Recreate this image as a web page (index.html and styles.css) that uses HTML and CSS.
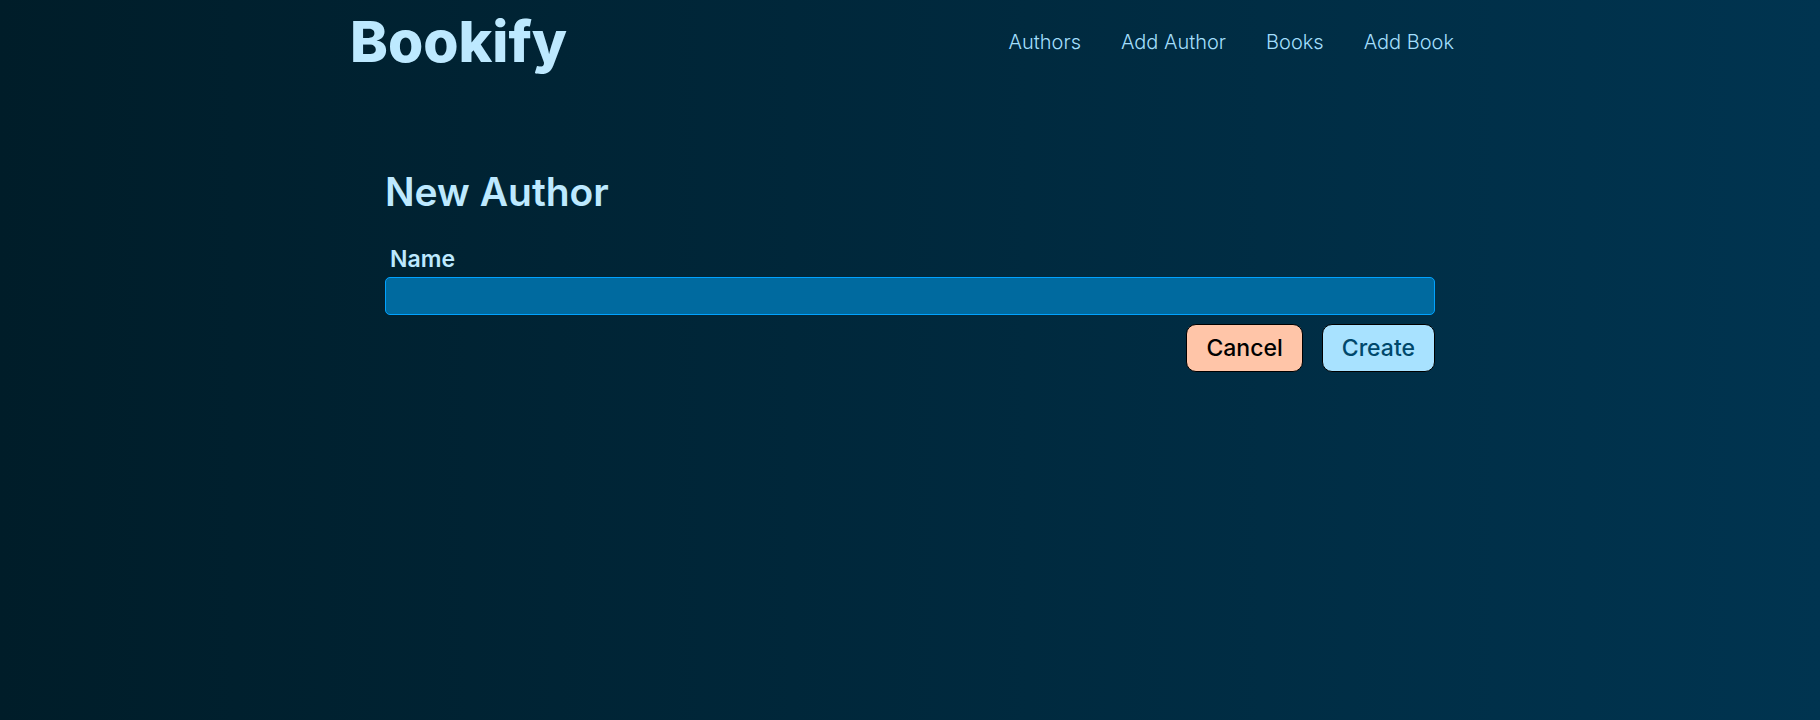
FILE: index.html
```
<!DOCTYPE html>
<html lang="en">
<head>
<meta charset="utf-8">
<meta name="viewport" content="width=device-width, initial-scale=1">
<title>Bookify</title>
<link rel="stylesheet" href="styles.css">
</head>
<body>
<header class="header">
  <h1 class="logo">Bookify</h1>
  <nav class="nav">
    <a class="nav-link" href="#authors">Authors</a>
    <a class="nav-link" href="#new-author">Add Author</a>
    <a class="nav-link" href="#books">Books</a>
    <a class="nav-link" href="#new-book">Add Book</a>
  </nav>
</header>
<main class="main">
  <h2 class="title">New Author</h2>
  <form class="form">
    <label class="label" for="name">Name</label>
    <input class="input" type="text" id="name" name="name">
    <div class="actions">
      <button class="button button-cancel" type="button">Cancel</button>
      <button class="button button-create" type="submit">Create</button>
    </div>
  </form>
</main>
</body>
</html>
```
FILE: styles.css
```
* {
  box-sizing: border-box;
}

body {
  margin: 0;
  min-height: 100vh;
  font-family: Inter, "Liberation Sans", sans-serif;
  color: #bde9ff;
  background: linear-gradient(to right, #001d29, #003450);
}

.header {
  display: flex;
  align-items: center;
  justify-content: space-between;
  max-width: 1120px;
  margin: 0 auto;
  padding: 8px 16px 8px 0;
}

.logo {
  margin: 0;
  font-size: 57px;
  line-height: 68px;
  font-weight: 800;
}

.nav {
  display: flex;
  gap: 40px;
}

.nav-link {
  color: #a3dffc;
  font-size: 20px;
  line-height: 24px;
  font-weight: 300;
  text-decoration: none;
}

.main {
  max-width: 1120px;
  margin: 0 auto;
  padding: 84px 35px;
}

.title {
  margin: 0 0 29px;
  font-size: 39px;
  line-height: 48px;
  font-weight: 600;
}

.form {
  display: flex;
  flex-direction: column;
}

.label {
  padding: 0 5px;
  margin-bottom: 4px;
  font-size: 23px;
  line-height: 28px;
  font-weight: 600;
}

.input {
  width: 100%;
  height: 38px;
  padding: 4px 8px;
  border: 1px solid #00a2ff;
  border-radius: 5px;
  background: #006a9f;
  color: #bde9ff;
  font: inherit;
  font-size: 20px;
}

.actions {
  display: flex;
  justify-content: flex-end;
  gap: 19px;
  margin-top: 9px;
}

.button {
  padding: 9px 19px;
  border: 1px solid #000;
  border-radius: 10px;
  font-family: inherit;
  font-size: 23px;
  line-height: 28px;
  font-weight: 500;
}

.button-cancel {
  background: #ffc5a8;
  color: #000;
}

.button-create {
  background: #a8e2ff;
  color: #00486b;
}
```
